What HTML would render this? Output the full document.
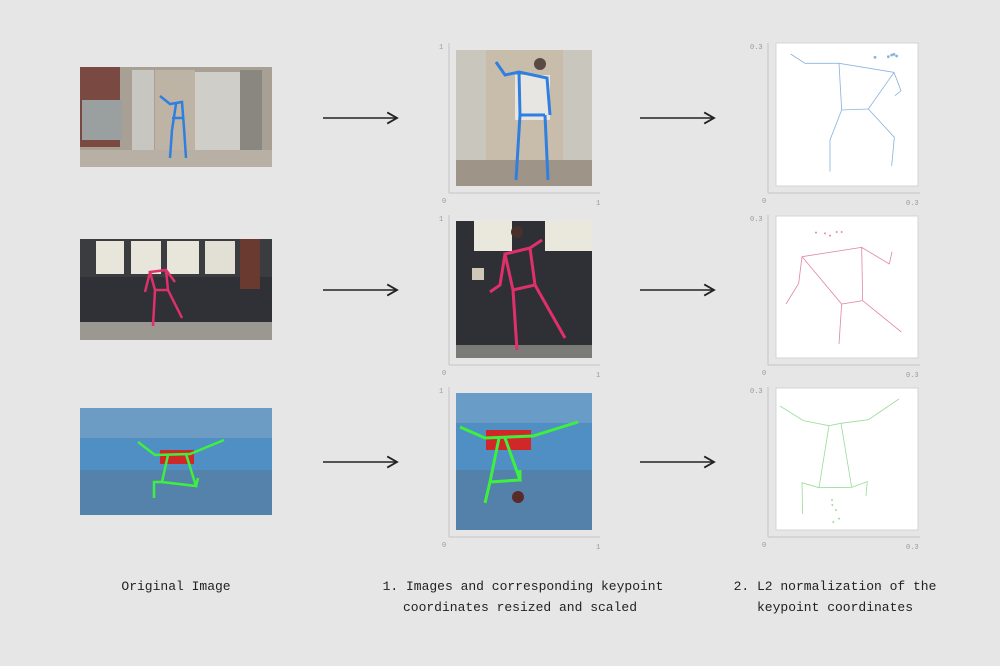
<!DOCTYPE html>
<html><head><style>
html,body{margin:0;padding:0;background:#e6e6e6;}
svg{display:block}
text{font-family:"Liberation Mono",monospace;}
</style></head><body>
<svg width="1000" height="666" viewBox="0 0 1000 666" xmlns="http://www.w3.org/2000/svg">
<rect width="1000" height="666" fill="#e6e6e6"/>
<defs>
<marker id="ah" markerWidth="10" markerHeight="10" refX="8" refY="5" orient="auto"><path d="M1,1 L8,5 L1,9" fill="none" stroke="#222" stroke-width="1.3"/></marker>
</defs>

<!-- Row1 original -->
<rect x="80" y="67" width="192" height="100" fill="#a8a095"/>
<rect x="80" y="67" width="40" height="80" fill="#7a4a42"/>
<rect x="82" y="100" width="40" height="40" fill="#9aa0a0"/>
<rect x="132" y="70" width="22" height="80" fill="#c8c6c0"/>
<rect x="155" y="70" width="40" height="80" fill="#bdb4a6"/>
<rect x="195" y="72" width="45" height="78" fill="#d0cec8"/>
<rect x="240" y="70" width="22" height="80" fill="#8a8680"/>
<rect x="80" y="150" width="192" height="17" fill="#b8b0a4"/>
<path d="M160,96 L170,104 L182,102 L184,128 L186,158 M176,104 L172,130 L170,158 M172,118 L184,118" stroke="#2f7fe0" stroke-width="2.5" fill="none"/>

<!-- Row1 resized -->
<rect x="456" y="50" width="136" height="136" fill="#b8ada0"/>
<rect x="456" y="50" width="30" height="110" fill="#c9c6be"/>
<rect x="563" y="50" width="29" height="110" fill="#c9c6be"/>
<rect x="486" y="50" width="77" height="110" fill="#c8bcaa"/>
<rect x="456" y="160" width="136" height="26" fill="#9e9488"/>
<rect x="515" y="75" width="35" height="45" fill="#e8e6e2"/>
<path d="M496,62 L505,75 L519,72 L547,78 L550,115 M519,72 L520,115 L545,115 M520,115 L516,180 M545,115 L548,180" stroke="#2f7fe0" stroke-width="3" fill="none"/>
<circle cx="540" cy="64" r="6" fill="#5a4a44"/>

<!-- Row2 original -->
<rect x="80" y="239" width="192" height="101" fill="#2f3136"/>
<rect x="80" y="239" width="192" height="38" fill="#3a3c40"/>
<rect x="96" y="241" width="28" height="33" fill="#e8e6da"/>
<rect x="131" y="241" width="30" height="33" fill="#e8e6da"/>
<rect x="167" y="241" width="32" height="33" fill="#e8e6da"/>
<rect x="205" y="241" width="30" height="33" fill="#e2e0d4"/>
<rect x="240" y="239" width="20" height="50" fill="#6a3a30"/>
<rect x="80" y="322" width="192" height="18" fill="#9a9890"/>
<path d="M150,272 L166,270 L168,290 L155,290 Z M150,272 L145,292 M166,270 L175,282 M155,290 L153,326 M168,290 L182,318" stroke="#e0306a" stroke-width="2.5" fill="none"/>

<!-- Row2 resized -->
<rect x="456" y="221" width="136" height="137" fill="#2e3036"/>
<rect x="474" y="221" width="38" height="30" fill="#eae8dc"/>
<rect x="545" y="221" width="47" height="30" fill="#eae8dc"/>
<rect x="456" y="345" width="136" height="13" fill="#7a7a76"/>
<rect x="472" y="268" width="12" height="12" fill="#cfc8b8"/>
<path d="M505,254 L530,248 L535,285 L513,290 Z M505,254 L500,285 L490,292 M530,248 L542,240 M513,290 L517,350 M535,285 L565,338" stroke="#e0306a" stroke-width="3" fill="none"/>
<circle cx="517" cy="232" r="6" fill="#4a302a"/>

<!-- Row3 original -->
<rect x="80" y="408" width="192" height="107" fill="#4f8fc4"/>
<rect x="80" y="408" width="192" height="30" fill="#6c9cc4"/>
<rect x="80" y="470" width="192" height="45" fill="#5a7a9a" opacity="0.6"/>
<rect x="160" y="450" width="34" height="14" fill="#d02828"/>
<path d="M138,442 L155,455 L190,454 L224,440 M168,455 L162,482 L196,486 L186,454 M162,482 L154,482 L154,498 M196,486 L198,478" stroke="#3ef03e" stroke-width="2.5" fill="none"/>

<!-- Row3 resized -->
<rect x="456" y="393" width="136" height="137" fill="#4f8fc4"/>
<rect x="456" y="393" width="136" height="30" fill="#6a9cc8"/>
<rect x="456" y="470" width="136" height="60" fill="#56789a" opacity="0.6"/>
<rect x="486" y="430" width="45" height="20" fill="#d02828"/>
<path d="M460,427 L485,438 L533,436 L578,422 M499,438 L490,482 L520,480 L505,438 M490,482 L485,503 M520,480 L520,470" stroke="#3ef03e" stroke-width="3" fill="none"/>
<circle cx="518" cy="497" r="6" fill="#5a2a28"/>

<!-- axes for resized -->
<g stroke="#c4c4c4" stroke-width="1" fill="none">
<path d="M449,193 L449,43 M449,193 L600,193"/>
<path d="M449,365 L449,215 M449,365 L600,365"/>
<path d="M449,537 L449,387 M449,537 L600,537"/>
<path d="M768,193 L768,43 M768,193 L920,193"/>
<path d="M768,365 L768,215 M768,365 L920,365"/>
<path d="M768,537 L768,387 M768,537 L920,537"/>
</g>
<g fill="#999" font-size="7">
<text x="439" y="49">1</text><text x="442" y="203">0</text><text x="596" y="205">1</text>
<text x="439" y="221">1</text><text x="442" y="375">0</text><text x="596" y="377">1</text>
<text x="439" y="393">1</text><text x="442" y="547">0</text><text x="596" y="549">1</text>
<text x="750" y="49">0.3</text><text x="762" y="203">0</text><text x="906" y="205">0.3</text>
<text x="750" y="221">0.3</text><text x="762" y="375">0</text><text x="906" y="377">0.3</text>
<text x="750" y="393">0.3</text><text x="762" y="547">0</text><text x="906" y="549">0.3</text>
</g>

<!-- plot boxes -->
<rect x="776" y="43" width="142" height="143" fill="#fff" stroke="#d4d4d4"/>
<rect x="776" y="216" width="142" height="142" fill="#fff" stroke="#d4d4d4"/>
<rect x="776" y="388" width="142" height="142" fill="#fff" stroke="#d4d4d4"/>

<g transform="translate(430,30) scale(0.33333)" stroke="#8ab4de" stroke-width="2.5" fill="none">
<path d="M1082,72 L1125,100 L1227,100 L1392,127 L1413,182 L1395,197 M1227,100 L1235,240 L1315,237 L1392,127 M1235,240 L1200,330 L1200,425 M1315,237 L1393,322 L1385,408"/>
<g fill="#8ab4de"><circle cx="1335" cy="82" r="3"/><circle cx="1375" cy="80" r="3"/><circle cx="1385" cy="75" r="3"/><circle cx="1392" cy="73" r="3"/><circle cx="1400" cy="78" r="3"/></g>
</g>
<g transform="translate(740,210) scale(0.33333)" fill="none" stroke-width="2.5">
<path stroke="#e08aa8" d="M186,140 L365,112 L368,272 L305,282 L186,140 M186,140 L176,220 L138,282 M365,112 L448,162 L456,125 M305,282 L297,402 M368,272 L484,366"/>
<g fill="#e08aa8" stroke="none"><circle cx="228" cy="68" r="3"/><circle cx="255" cy="70" r="3"/><circle cx="270" cy="77" r="3"/><circle cx="290" cy="66" r="3"/><circle cx="305" cy="66" r="3"/></g>
<path stroke="#9cdc9c" d="M120,588 L190,632 L267,647 L303,640 L385,629 L477,567 M267,647 L237,833 L335,832 L303,640 M237,833 L186,818 L188,912 M335,832 L382,815 L378,858"/>
<g fill="#9cdc9c" stroke="none"><circle cx="276" cy="870" r="3"/><circle cx="277" cy="885" r="3"/><circle cx="288" cy="900" r="3"/><circle cx="297" cy="926" r="3"/><circle cx="280" cy="936" r="3"/></g>
</g>

<!-- arrows -->
<g stroke="#222" stroke-width="1.4" marker-end="url(#ah)">
<line x1="323" y1="118" x2="397" y2="118"/><line x1="640" y1="118" x2="714" y2="118"/>
<line x1="323" y1="290" x2="397" y2="290"/><line x1="640" y1="290" x2="714" y2="290"/>
<line x1="323" y1="462" x2="397" y2="462"/><line x1="640" y1="462" x2="714" y2="462"/>
</g>

<g fill="#222" font-size="13" text-anchor="middle">
<text x="176" y="590">Original Image</text>
<text x="523" y="590">1. Images and corresponding keypoint</text>
<text x="520" y="611">coordinates resized and scaled</text>
<text x="835" y="590">2. L2 normalization of the</text>
<text x="835" y="611">keypoint coordinates</text>
</g>
</svg>
</body></html>
